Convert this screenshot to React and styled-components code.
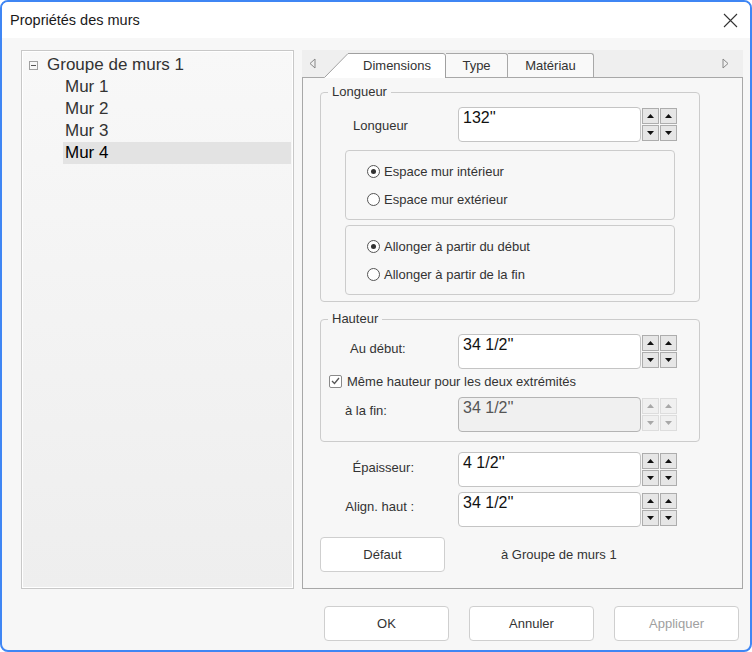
import React from 'react'
import styled, { createGlobalStyle } from 'styled-components'

const GlobalStyle = createGlobalStyle`
  html, body {
    margin: 0;
    padding: 0;
    background: #ffffff;
  }
  body {
    font-family: 'Liberation Sans', Arial, sans-serif;
  }
  * {
    box-sizing: border-box;
  }
`

const Window = styled.div`
  width: 752px;
  height: 652px;
  border: 2px solid #3f86f4;
  border-radius: 8px;
  overflow: hidden;
  display: flex;
  flex-direction: column;
  background: #f7f7f7;
  color: #333;
`

const TitleBar = styled.div`
  height: 36px;
  flex: none;
  background: #ffffff;
  display: flex;
  align-items: center;
  justify-content: space-between;
  padding: 0 12px 0 8px;
  font-size: 14.5px;
  color: #1a1a1a;
`

const Body = styled.div`
  flex: 1;
  display: flex;
  flex-direction: column;
  padding: 12px 7px 0 19px;
`

const Main = styled.div`
  height: 539px;
  display: flex;
  gap: 8px;
`

/* ---------- tree ---------- */

const Tree = styled.div`
  width: 273px;
  border: 1px solid #c8c8c8;
  box-shadow: inset 0 0 0 1px #ffffff;
  background: linear-gradient(#f8f8f8, #eeeeee);
  padding: 3px 2px 0 1px;
  font-size: 17px;
`

const TreeRow = styled.div`
  height: 22px;
  display: flex;
  align-items: center;
  margin-left: ${p => p.$indent}px;
  padding-left: 2px;
  background: ${p => (p.$selected ? '#e3e3e3' : 'transparent')};
  color: ${p => (p.$selected ? '#000' : '#333')};
`

const Expander = styled.span`
  width: 9px;
  height: 9px;
  border: 1px solid #a0a0a0;
  display: flex;
  align-items: center;
  justify-content: center;
  margin: 0 9px 0 4px;
  &::after {
    content: '';
    width: 5px;
    height: 1px;
    background: #555;
  }
`

/* ---------- tabs ---------- */

const TabArea = styled.div`
  width: 441px;
  display: flex;
  flex-direction: column;
`

const TabStrip = styled.div`
  height: 27px;
  flex: none;
  display: flex;
  align-items: flex-end;
  background: #efefef;
`

const ScrollArrow = styled.div`
  width: 20px;
  height: 27px;
  display: flex;
  align-items: center;
  justify-content: center;
  margin-right: ${p => p.$mr || 0}px;
  margin-left: ${p => p.$ml || 0}px;
`

const ActiveTab = styled.div`
  position: relative;
  z-index: 1;
  width: 122px;
  height: 25px;
  margin-bottom: -1px;
  padding-left: 24px;
  display: flex;
  align-items: center;
  justify-content: center;
  font-size: 13px;
  color: #333;
  svg {
    position: absolute;
    left: 0;
    top: 0;
  }
  span {
    position: relative;
  }
`

const Tab = styled.div`
  width: ${p => p.$w}px;
  height: 24px;
  border: 1px solid #a8a8a8;
  border-left: none;
  border-bottom: none;
  border-radius: 0 3px 0 0;
  background: #f9f9f9;
  display: flex;
  align-items: center;
  justify-content: center;
  font-size: 13px;
  color: #333;
`

const Spacer = styled.div`
  flex: 1;
`

const Panel = styled.div`
  flex: 1;
  border: 1px solid #a8a8a8;
  padding: 0 0 0 17px;
  display: flex;
  flex-direction: column;
  font-size: 13px;
`

/* ---------- groups ---------- */

const Group = styled.fieldset`
  margin: ${p => p.$mt}px 0 0 0;
  width: 380px;
  border: 1px solid #cccccc;
  border-radius: 4px;
  padding: ${p => p.$pt}px 0 ${p => p.$pb}px 0;
  min-width: 0;
`

const Legend = styled.legend`
  margin-left: 7px;
  padding: 0 4px;
  line-height: 14px;
  font-size: 13px;
  color: #333;
`

const SubGroup = styled.div`
  margin: ${p => p.$mt}px 0 0 24px;
  width: 330px;
  height: 70px;
  border: 1px solid #cccccc;
  border-radius: 4px;
  padding: 6px 0 6px 21px;
`

const RadioRow = styled.div`
  height: 28px;
  display: flex;
  align-items: center;
  gap: 4px;
  color: #333;
`

const RadioCircle = styled.span`
  width: 13px;
  height: 13px;
  border-radius: 50%;
  border: 1px solid #555;
  background: #fff;
  display: flex;
  align-items: center;
  justify-content: center;
  &::after {
    content: '';
    width: 5px;
    height: 5px;
    border-radius: 50%;
    background: ${p => (p.$checked ? '#333' : 'transparent')};
  }
`

const Row = styled.div`
  display: grid;
  grid-template-columns: ${p => p.$col}px 183px 36px;
  align-items: start;
  margin-top: ${p => p.$mt || 0}px;
  height: 35px;
`

const Label = styled.div`
  margin-top: ${p => p.$top}px;
  line-height: 15px;
  padding-left: ${p => p.$indent || 0}px;
  padding-right: ${p => p.$pr || 0}px;
  text-align: ${p => p.$align || 'left'};
  color: #333;
  white-space: nowrap;
`

const Input = styled.div`
  height: 35px;
  border: 1px solid ${p => (p.$disabled ? '#b4b4b4' : '#c4c4c4')};
  border-radius: 4px;
  background: ${p => (p.$disabled ? '#f0f0f0' : '#ffffff')};
  padding: 2px 0 0 4px;
  font-size: 16px;
  line-height: 16px;
  color: ${p => (p.$disabled ? '#555' : '#111')};
`

const Spin = styled.div`
  display: grid;
  grid-template-columns: 17px 17px;
  grid-template-rows: 16px 16px;
  gap: 1px;
  padding-left: 1px;
  margin-top: 1px;
`

const SpinBtn = styled.div`
  border: 1px solid ${p => (p.$disabled ? '#dddddd' : '#adadad')};
  background: ${p => (p.$disabled ? '#f0f0f0' : '#e6e6e6')};
  display: flex;
  align-items: center;
  justify-content: center;
`

const CheckRow = styled.div`
  height: 24px;
  display: flex;
  align-items: center;
  gap: 5px;
  padding-left: 8px;
  color: #333;
`

const CheckBox = styled.span`
  width: 13px;
  height: 13px;
  border: 1px solid #8a8a8a;
  border-radius: 2px;
  background: #fff;
  display: flex;
  align-items: center;
  justify-content: center;
`

const ButtonRow = styled.div`
  display: flex;
  align-items: center;
  margin-top: ${p => p.$mt || 0}px;
`

const Button = styled.div`
  width: 125px;
  height: 35px;
  border: 1px solid #cfcfcf;
  border-radius: 4px;
  background: #ffffff;
  display: flex;
  align-items: center;
  justify-content: center;
  font-size: 13px;
  color: ${p => (p.$disabled ? '#a0a0a0' : '#333')};
`

const Note = styled.div`
  margin-left: 56px;
  color: #333;
`

const Footer = styled.div`
  display: flex;
  justify-content: flex-end;
  gap: 20px;
  padding: 17px 4px 0 0;
`

/* ---------- small drawings ---------- */

const Arrow = ({ up, disabled }) => (
  <svg width='7' height='4' viewBox='0 0 7 4'>
    <polygon
      points={up ? '0,4 7,4 3.5,0' : '0,0 7,0 3.5,4'}
      fill={disabled ? '#a8a8a8' : '#111'}
    />
  </svg>
)

const Spinner = ({ disabled }) => (
  <Spin>
    <SpinBtn $disabled={disabled}><Arrow up disabled={disabled} /></SpinBtn>
    <SpinBtn $disabled={disabled}><Arrow up disabled={disabled} /></SpinBtn>
    <SpinBtn $disabled={disabled}><Arrow disabled={disabled} /></SpinBtn>
    <SpinBtn $disabled={disabled}><Arrow disabled={disabled} /></SpinBtn>
  </Spin>
)

const Radio = ({ checked, children }) => (
  <RadioRow>
    <RadioCircle $checked={checked} />
    {children}
  </RadioRow>
)

function App () {
  return (
    <>
      <GlobalStyle />
      <Window>
        <TitleBar>
          <span>Propriétés des murs</span>
          <svg width='15' height='15' viewBox='0 0 15 15'>
            <path d='M1 1 L14 14 M14 1 L1 14' stroke='#333' strokeWidth='1.1' />
          </svg>
        </TitleBar>

        <Body>
          <Main>
            <Tree>
              <TreeRow $indent={0}>
                <Expander />
                Groupe de murs 1
              </TreeRow>
              <TreeRow $indent={40}>Mur 1</TreeRow>
              <TreeRow $indent={40}>Mur 2</TreeRow>
              <TreeRow $indent={40}>Mur 3</TreeRow>
              <TreeRow $indent={40} $selected>Mur 4</TreeRow>
            </Tree>

            <TabArea>
              <TabStrip>
                <ScrollArrow $mr={2}>
                  <svg width='7' height='11' viewBox='0 0 7 11'>
                    <polygon points='6,1 6,10 1,5.5' fill='none' stroke='#888' />
                  </svg>
                </ScrollArrow>
                <ActiveTab>
                  <svg width='122' height='25' viewBox='0 0 122 25'>
                    <path d='M0 25 L24 0 L119 0 Q122 0 122 3 L122 25 Z' fill='#ffffff' />
                    <path d='M0.5 24.5 L24 0.5 L119 0.5 Q121.5 0.5 121.5 3 L121.5 25' fill='none' stroke='#a0a0a0' />
                  </svg>
                  <span>Dimensions</span>
                </ActiveTab>
                <Tab $w={62}>Type</Tab>
                <Tab $w={86}>Matériau</Tab>
                <Spacer />
                <ScrollArrow $mr={8}>
                  <svg width='7' height='11' viewBox='0 0 7 11'>
                    <polygon points='1,1 1,10 6,5.5' fill='none' stroke='#888' />
                  </svg>
                </ScrollArrow>
              </TabStrip>

              <Panel>
                <Group $mt={7} $pt={8} $pb={6}>
                  <Legend>Longueur</Legend>
                  <Row $col={137}>
                    <Label $top={11} $indent={32}>Longueur</Label>
                    <Input>132''</Input>
                    <Spinner />
                  </Row>
                  <SubGroup $mt={8}>
                    <Radio checked>Espace mur intérieur</Radio>
                    <Radio>Espace mur extérieur</Radio>
                  </SubGroup>
                  <SubGroup $mt={5}>
                    <Radio checked>Allonger à partir du début</Radio>
                    <Radio>Allonger à partir de la fin</Radio>
                  </SubGroup>
                </Group>

                <Group $mt={10} $pt={8} $pb={9}>
                  <Legend>Hauteur</Legend>
                  <Row $col={137}>
                    <Label $top={7} $indent={29}>Au début:</Label>
                    <Input>34 1/2''</Input>
                    <Spinner />
                  </Row>
                  <CheckRow>
                    <CheckBox>
                      <svg width='9' height='8' viewBox='0 0 9 8'>
                        <path d='M1 4 L3.5 6.5 L8 1' fill='none' stroke='#555' strokeWidth='1.3' />
                      </svg>
                    </CheckBox>
                    Même hauteur pour les deux extrémités
                  </CheckRow>
                  <Row $col={137} $mt={4}>
                    <Label $top={6} $indent={24}>à la fin:</Label>
                    <Input $disabled>34 1/2''</Input>
                    <Spinner disabled />
                  </Row>
                </Group>

                <Row $col={138} $mt={10}>
                  <Label $top={8} $align='right' $pr={44}>Épaisseur:</Label>
                  <Input>4 1/2''</Input>
                  <Spinner />
                </Row>
                <Row $col={138} $mt={5}>
                  <Label $top={7} $align='right' $pr={44}>Align. haut :</Label>
                  <Input>34 1/2''</Input>
                  <Spinner />
                </Row>

                <ButtonRow $mt={10}>
                  <Button>Défaut</Button>
                  <Note>à Groupe de murs 1</Note>
                </ButtonRow>
              </Panel>
            </TabArea>
          </Main>

          <Footer>
            <Button>OK</Button>
            <Button>Annuler</Button>
            <Button $disabled>Appliquer</Button>
          </Footer>
        </Body>
      </Window>
    </>
  )
}

export default App
